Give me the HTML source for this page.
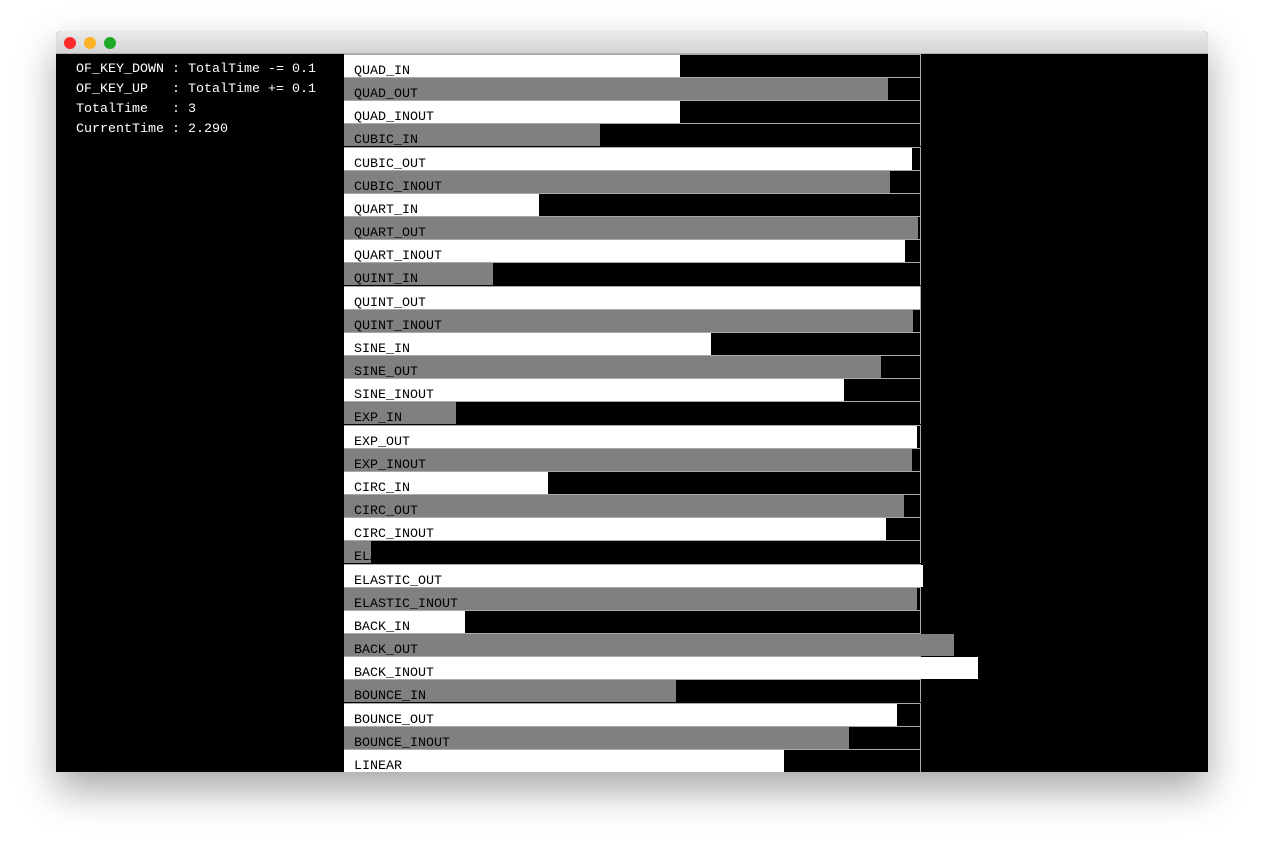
<!DOCTYPE html><html><head><style>
body{margin:0;width:1264px;height:853px;background:#fff;position:relative;overflow:hidden;font-family:"Liberation Mono",monospace}
.win{position:absolute;left:56px;top:31px;width:1152px;height:741px;background:#000;border-radius:5px 5px 0 0;box-shadow:0 18px 40px rgba(0,0,0,.35);overflow:visible}
.tb{position:absolute;left:0;top:0;width:1152px;height:22px;background:linear-gradient(#ebebeb,#d4d4d4);border-radius:5px 5px 0 0;border-bottom:1px solid #b0b0b0}
.d{position:absolute;top:6px;width:12px;height:12px;border-radius:50%}
.info{position:absolute;left:76px;top:60px;color:#fff;font-size:13.33px;line-height:20px;white-space:pre}
.r{position:absolute;left:344px;width:576px;height:22px;border-top:1px solid #aaa;border-right:1px solid #aaa;background:#000}
.b{position:absolute;left:0;top:0;height:22px}
.w{background:#fff}.g{background:#808080}
.t{position:absolute;left:10px;top:10px;font-size:13.33px;color:#000;line-height:14px;white-space:pre}
</style></head><body>
<div class="win"><div class="tb"><div class="d" style="left:8px;background:#fc2b2b"></div><div class="d" style="left:28px;background:#fdb124"></div><div class="d" style="left:48px;background:#1fab2a"></div></div></div>
<div class="info">OF_KEY_DOWN : TotalTime -= 0.1
OF_KEY_UP   : TotalTime += 0.1
TotalTime   : 3
CurrentTime : 2.290</div>
<div class="r" style="top:54px"><div class="b w" style="width:336px"></div><span class="t">QUAD_IN</span></div>
<div class="r" style="top:77px"><div class="b g" style="width:544px"></div><span class="t">QUAD_OUT</span></div>
<div class="r" style="top:100px"><div class="b w" style="width:336px"></div><span class="t">QUAD_INOUT</span></div>
<div class="r" style="top:123px"><div class="b g" style="width:256px"></div><span class="t">CUBIC_IN</span></div>
<div class="r" style="top:147px"><div class="b w" style="width:568px"></div><span class="t">CUBIC_OUT</span></div>
<div class="r" style="top:170px"><div class="b g" style="width:546px"></div><span class="t">CUBIC_INOUT</span></div>
<div class="r" style="top:193px"><div class="b w" style="width:195px"></div><span class="t">QUART_IN</span></div>
<div class="r" style="top:216px"><div class="b g" style="width:574px"></div><span class="t">QUART_OUT</span></div>
<div class="r" style="top:239px"><div class="b w" style="width:561px"></div><span class="t">QUART_INOUT</span></div>
<div class="r" style="top:262px"><div class="b g" style="width:149px"></div><span class="t">QUINT_IN</span></div>
<div class="r" style="top:286px"><div class="b w" style="width:576px"></div><span class="t">QUINT_OUT</span></div>
<div class="r" style="top:309px"><div class="b g" style="width:569px"></div><span class="t">QUINT_INOUT</span></div>
<div class="r" style="top:332px"><div class="b w" style="width:367px"></div><span class="t">SINE_IN</span></div>
<div class="r" style="top:355px"><div class="b g" style="width:537px"></div><span class="t">SINE_OUT</span></div>
<div class="r" style="top:378px"><div class="b w" style="width:500px"></div><span class="t">SINE_INOUT</span></div>
<div class="r" style="top:401px"><div class="b g" style="width:112px"></div><span class="t">EXP_IN</span></div>
<div class="r" style="top:425px"><div class="b w" style="width:573px"></div><span class="t">EXP_OUT</span></div>
<div class="r" style="top:448px"><div class="b g" style="width:568px"></div><span class="t">EXP_INOUT</span></div>
<div class="r" style="top:471px"><div class="b w" style="width:204px"></div><span class="t">CIRC_IN</span></div>
<div class="r" style="top:494px"><div class="b g" style="width:560px"></div><span class="t">CIRC_OUT</span></div>
<div class="r" style="top:517px"><div class="b w" style="width:542px"></div><span class="t">CIRC_INOUT</span></div>
<div class="r" style="top:540px"><div class="b g" style="width:27px;overflow:hidden"><span class="t">ELASTIC_IN</span></div></div>
<div class="r" style="top:564px"><div class="b w" style="width:579px"></div><span class="t">ELASTIC_OUT</span></div>
<div class="r" style="top:587px"><div class="b g" style="width:573px"></div><span class="t">ELASTIC_INOUT</span></div>
<div class="r" style="top:610px"><div class="b w" style="width:121px"></div><span class="t">BACK_IN</span></div>
<div class="r" style="top:633px"><div class="b g" style="width:610px"></div><span class="t">BACK_OUT</span></div>
<div class="r" style="top:656px"><div class="b w" style="width:634px"></div><span class="t">BACK_INOUT</span></div>
<div class="r" style="top:679px"><div class="b g" style="width:332px"></div><span class="t">BOUNCE_IN</span></div>
<div class="r" style="top:703px"><div class="b w" style="width:553px"></div><span class="t">BOUNCE_OUT</span></div>
<div class="r" style="top:726px"><div class="b g" style="width:505px"></div><span class="t">BOUNCE_INOUT</span></div>
<div class="r" style="top:749px"><div class="b w" style="width:440px"></div><span class="t">LINEAR</span></div>
</body></html>
